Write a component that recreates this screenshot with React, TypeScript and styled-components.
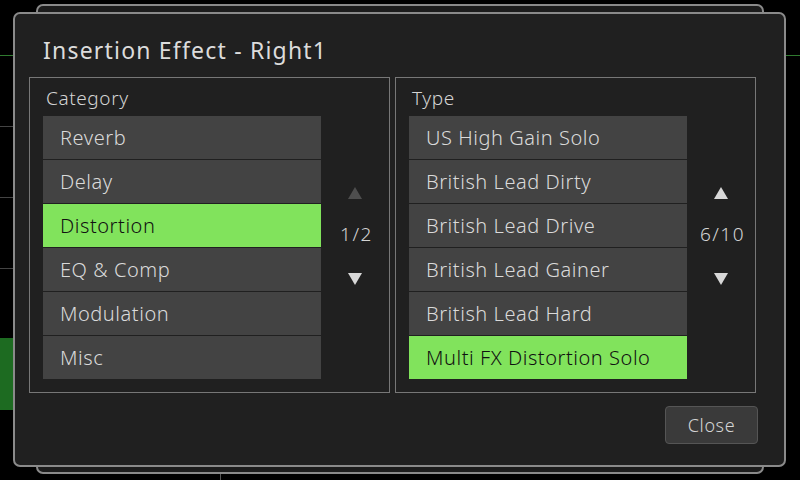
import { FC } from "react";
import styled, { createGlobalStyle } from "styled-components";

const GlobalStyle = createGlobalStyle`
  html, body {
    margin: 0;
    padding: 0;
    background: #000;
  }
  body {
    font-family: "Noto Sans", "DejaVu Sans", sans-serif;
  }
`;

const Screen = styled.div`
  position: relative;
  width: 800px;
  height: 480px;
  overflow: hidden;
  background: #000;
`;

// bits of the screen behind the dialog
const BgLine = styled.div<{ $top: number; $left: number; $width: number; $color: string }>`
  position: absolute;
  top: ${(p) => p.$top}px;
  left: ${(p) => p.$left}px;
  width: ${(p) => p.$width}px;
  height: 1px;
  background: ${(p) => p.$color};
`;

const BgBlock = styled.div`
  position: absolute;
  left: 0;
  top: 338px;
  width: 13px;
  height: 72px;
  background: #1d6b21;
`;

const BgTick = styled.div`
  position: absolute;
  left: 220px;
  top: 474px;
  width: 1px;
  height: 6px;
  background: #555;
`;

const BackWindow = styled.div`
  position: absolute;
  left: 36px;
  top: 4px;
  width: 728px;
  height: 470px;
  box-sizing: border-box;
  border: 2px solid #8a8a8a;
  border-radius: 7px;
  background: #1c1c1c;
`;

const Dialog = styled.div`
  position: absolute;
  left: 13px;
  top: 12px;
  width: 773px;
  height: 455px;
  box-sizing: border-box;
  border: 2px solid #8a8a8a;
  border-radius: 7px;
  background: #202020;
  padding: 0 14px;
  display: flex;
  flex-direction: column;
`;

const Title = styled.h1`
  margin: 0;
  padding: 21px 0 0 14px;
  height: 42px;
  font-size: 23px;
  font-weight: 400;
  line-height: 30px;
  color: #dcdcdc;
  letter-spacing: 1.2px;
`;

const Panels = styled.div`
  display: flex;
  gap: 5px;
`;

const Panel = styled.section`
  width: 361px;
  height: 316px;
  box-sizing: border-box;
  border: 1px solid #777;
  padding: 0 0 0 13px;
  display: flex;
  flex-direction: column;
`;

const PanelLabel = styled.div`
  height: 38px;
  padding-left: 3px;
  font-size: 19px;
  font-weight: 300;
  letter-spacing: 0.6px;
  line-height: 40px;
  color: #d4d4d4;
`;

const PanelBody = styled.div`
  display: flex;
`;

const List = styled.ul`
  list-style: none;
  margin: 0;
  padding: 0;
  width: 278px;
`;

const Row = styled.li<{ $selected?: boolean }>`
  height: 43px;
  margin-bottom: 1px;
  padding-left: 17px;
  display: flex;
  align-items: center;
  font-size: 20px;
  font-weight: 300;
  letter-spacing: 0.55px;
  color: ${(p) => (p.$selected ? "#111" : "#dadada")};
  background: ${(p) => (p.$selected ? "#81e35c" : "#434343")};
  &:last-child {
    margin-bottom: 0;
  }
`;

const Pager = styled.div`
  flex: 1;
  display: flex;
  flex-direction: column;
  align-items: center;
  padding-top: 71px;
`;

const Arrow = styled.div<{ $up?: boolean; $dim?: boolean }>`
  width: 0;
  height: 0;
  border-left: 7px solid transparent;
  border-right: 7px solid transparent;
  ${(p) =>
    p.$up
      ? `border-bottom: 12px solid ${p.$dim ? "#4e4e4e" : "#d8d8d8"};`
      : `border-top: 12px solid ${p.$dim ? "#4e4e4e" : "#d8d8d8"};`}
`;

const PageText = styled.div`
  margin: 25px 0 29px 3px;
  font-size: 19px;
  font-weight: 300;
  letter-spacing: 1.5px;
  line-height: 20px;
  color: #d4d4d4;
`;

const Footer = styled.div`
  display: flex;
  justify-content: flex-end;
  margin-top: 13px;
  margin-right: 12px;
`;

const Button = styled.button`
  width: 93px;
  height: 38px;
  box-sizing: border-box;
  border: 1px solid #555;
  border-radius: 4px;
  background: #3a3a3a;
  color: #d4d4d4;
  font-family: "Noto Sans", "DejaVu Sans", sans-serif;
  font-size: 18px;
  font-weight: 300;
  letter-spacing: 0.6px;
  padding: 0;
`;

const categories = ["Reverb", "Delay", "Distortion", "EQ & Comp", "Modulation", "Misc"];
const types = [
  "US High Gain Solo",
  "British Lead Dirty",
  "British Lead Drive",
  "British Lead Gainer",
  "British Lead Hard",
  "Multi FX Distortion Solo",
];

const App: FC = () => {
  return (
    <Screen>
      <GlobalStyle />
      <BgLine $top={55} $left={0} $width={14} $color="#2f7a2f" />
      <BgLine $top={55} $left={786} $width={14} $color="#2f7a2f" />
      <BgLine $top={126} $left={0} $width={14} $color="#444" />
      <BgLine $top={197} $left={0} $width={14} $color="#444" />
      <BgLine $top={268} $left={0} $width={14} $color="#444" />
      <BgBlock />
      <BgTick />
      <BackWindow />
      <Dialog>
        <Title>Insertion Effect - Right1</Title>
        <Panels>
          <Panel>
            <PanelLabel>Category</PanelLabel>
            <PanelBody>
              <List>
                {categories.map((c) => (
                  <Row key={c} $selected={c === "Distortion"}>
                    {c}
                  </Row>
                ))}
              </List>
              <Pager>
                <Arrow $up $dim />
                <PageText>1/2</PageText>
                <Arrow />
              </Pager>
            </PanelBody>
          </Panel>
          <Panel>
            <PanelLabel>Type</PanelLabel>
            <PanelBody>
              <List>
                {types.map((t) => (
                  <Row key={t} $selected={t === "Multi FX Distortion Solo"}>
                    {t}
                  </Row>
                ))}
              </List>
              <Pager>
                <Arrow $up />
                <PageText>6/10</PageText>
                <Arrow />
              </Pager>
            </PanelBody>
          </Panel>
        </Panels>
        <Footer>
          <Button>Close</Button>
        </Footer>
      </Dialog>
    </Screen>
  );
};

export default App;
